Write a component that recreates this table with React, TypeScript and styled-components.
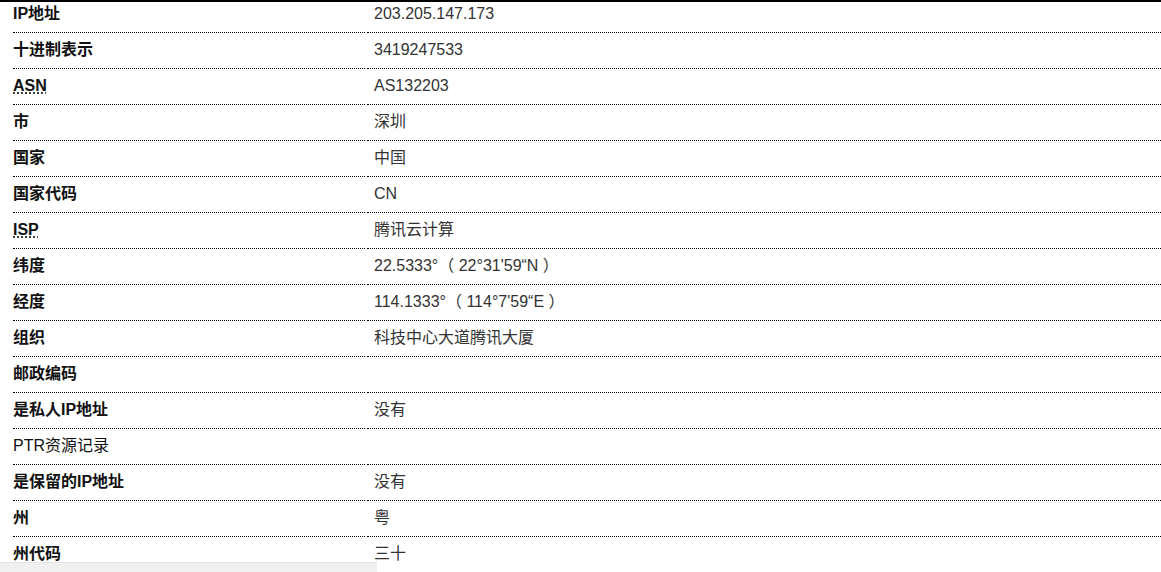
import React from "react";
import styled, { createGlobalStyle } from "styled-components";

const GlobalStyle = createGlobalStyle`
  html, body { margin: 0; padding: 0; background: #fff; }
  body { font-family: "Liberation Sans", "Noto Sans CJK SC", sans-serif; overflow: hidden; }
`;

const Page = styled.div`
  position: relative;
  width: 1161px;
  height: 572px;
  overflow: hidden;
  border-top: 2px solid #000;
  box-sizing: border-box;
`;

const Table = styled.div`
  display: flex;
  flex-direction: column;
  margin-top: -5px;
  padding-left: 13px;
`;

const Row = styled.div`
  display: grid;
  grid-template-columns: 352px 1fr;
  column-gap: 2px;
  height: 36px;
`;

const Cell = styled.div`
  display: flex;
  align-items: center;
  padding-bottom: 1px;
  border-bottom: 1px dotted #000;
  box-sizing: border-box;
  white-space: pre;
  line-height: 20px;
  font-family: "Liberation Sans", "Noto Sans CJK SC", sans-serif;
  font-size: 16px;
`;

const Label = styled(Cell)<{ $plain?: boolean }>`
  font-weight: ${(p) => (p.$plain ? 400 : 700)};
  color: #111;
`;

const Value = styled(Cell)`
  padding-left: 7px;
  color: #333;
`;

const Abbr = styled.abbr`
  text-decoration: underline dotted;
  text-underline-offset: 2px;
  cursor: help;
`;

const BottomBar = styled.div`
  position: absolute;
  left: 0;
  bottom: 0;
  width: 377px;
  height: 9px;
  background: #f0f0f0;
  border-top: 1px solid #e4e4e4;
`;

type Item = { label: React.ReactNode; value: React.ReactNode; plain?: boolean };

const rows: Item[] = [
  { label: "IP地址", value: "203.205.147.173" },
  { label: "十进制表示", value: "3419247533" },
  { label: <Abbr title="Autonomous System Number">ASN</Abbr>, value: "AS132203" },
  { label: "市", value: "深圳" },
  { label: "国家", value: "中国" },
  { label: "国家代码", value: "CN" },
  { label: <Abbr title="Internet Service Provider">ISP</Abbr>, value: "腾讯云计算" },
  { label: "纬度", value: "22.5333°（ 22°31'59“N ）" },
  { label: "经度", value: "114.1333°（ 114°7'59“E ）" },
  { label: "组织", value: "科技中心大道腾讯大厦" },
  { label: "邮政编码", value: "" },
  { label: "是私人IP地址", value: "没有" },
  { label: "PTR资源记录", value: "", plain: true },
  { label: "是保留的IP地址", value: "没有" },
  { label: "州", value: "粤" },
  { label: "州代码", value: "三十" },
];

export default function App() {
  return (
    <>
      <GlobalStyle />
      <Page>
        <Table>
          {rows.map((r, i) => (
            <Row key={i}>
              <Label $plain={r.plain}>{r.label}</Label>
              <Value>{r.value}</Value>
            </Row>
          ))}
        </Table>
        <BottomBar />
      </Page>
    </>
  );
}
